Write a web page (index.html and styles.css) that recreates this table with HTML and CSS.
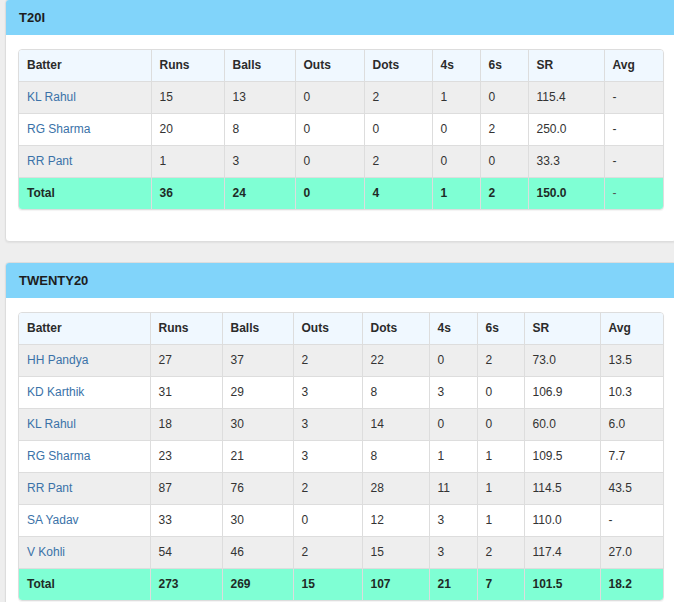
FILE: index.html
```html
<!DOCTYPE html>
<html lang="en">
<head>
    <meta charset="UTF-8">
    <meta name="viewport" content="width=device-width, initial-scale=1.0">
    <title>Batting by Format</title>
    <link rel="stylesheet" href="styles.css">
</head>
<body>
    <div class="page">
        <!-- T20I -->
        <div class="panel">
            <div class="panel-heading">T20I</div>
            <div class="panel-body">
                <div class="table-wrap">
                    <table class="scores scores-t20i">
                        <colgroup>
                            <col><col><col><col><col><col><col><col><col>
                        </colgroup>
                        <thead>
                            <tr>
                                <th>Batter</th><th>Runs</th><th>Balls</th><th>Outs</th><th>Dots</th><th>4s</th><th>6s</th><th>SR</th><th>Avg</th>
                            </tr>
                        </thead>
                        <tbody>
                            <tr><td><a href="#">KL Rahul</a></td><td>15</td><td>13</td><td>0</td><td>2</td><td>1</td><td>0</td><td>115.4</td><td>-</td></tr>
                            <tr><td><a href="#">RG Sharma</a></td><td>20</td><td>8</td><td>0</td><td>0</td><td>0</td><td>2</td><td>250.0</td><td>-</td></tr>
                            <tr><td><a href="#">RR Pant</a></td><td>1</td><td>3</td><td>0</td><td>2</td><td>0</td><td>0</td><td>33.3</td><td>-</td></tr>
                            <tr class="total"><td>Total</td><td>36</td><td>24</td><td>0</td><td>4</td><td>1</td><td>2</td><td>150.0</td><td class="muted">-</td></tr>
                        </tbody>
                    </table>
                </div>
            </div>
        </div>

        <!-- TWENTY20 -->
        <div class="panel">
            <div class="panel-heading">TWENTY20</div>
            <div class="panel-body">
                <div class="table-wrap">
                    <table class="scores scores-t20">
                        <colgroup>
                            <col><col><col><col><col><col><col><col><col>
                        </colgroup>
                        <thead>
                            <tr>
                                <th>Batter</th><th>Runs</th><th>Balls</th><th>Outs</th><th>Dots</th><th>4s</th><th>6s</th><th>SR</th><th>Avg</th>
                            </tr>
                        </thead>
                        <tbody>
                            <tr><td><a href="#">HH Pandya</a></td><td>27</td><td>37</td><td>2</td><td>22</td><td>0</td><td>2</td><td>73.0</td><td>13.5</td></tr>
                            <tr><td><a href="#">KD Karthik</a></td><td>31</td><td>29</td><td>3</td><td>8</td><td>3</td><td>0</td><td>106.9</td><td>10.3</td></tr>
                            <tr><td><a href="#">KL Rahul</a></td><td>18</td><td>30</td><td>3</td><td>14</td><td>0</td><td>0</td><td>60.0</td><td>6.0</td></tr>
                            <tr><td><a href="#">RG Sharma</a></td><td>23</td><td>21</td><td>3</td><td>8</td><td>1</td><td>1</td><td>109.5</td><td>7.7</td></tr>
                            <tr><td><a href="#">RR Pant</a></td><td>87</td><td>76</td><td>2</td><td>28</td><td>11</td><td>1</td><td>114.5</td><td>43.5</td></tr>
                            <tr><td><a href="#">SA Yadav</a></td><td>33</td><td>30</td><td>0</td><td>12</td><td>3</td><td>1</td><td>110.0</td><td>-</td></tr>
                            <tr><td><a href="#">V Kohli</a></td><td>54</td><td>46</td><td>2</td><td>15</td><td>3</td><td>2</td><td>117.4</td><td>27.0</td></tr>
                            <tr class="total"><td>Total</td><td>273</td><td>269</td><td>15</td><td>107</td><td>21</td><td>7</td><td>101.5</td><td>18.2</td></tr>
                        </tbody>
                    </table>
                </div>
            </div>
        </div>
    </div>
</body>
</html>
```

FILE: styles.css
```css
html, body {
    margin: 0;
    overflow: hidden;
}

body {
    font-family: "Liberation Sans", Arial, sans-serif;
    font-size: 12px;
    color: #333;
    background: #eeeeee;
}

.page {
    padding-left: 5px;
    margin-top: -1px;
}

.panel {
    width: 672px;
    box-sizing: border-box;
    background: white;
    border: 1px solid #dddddd;
    border-radius: 4px;
    margin-bottom: 20px;
    box-shadow: 0 1px 2px rgba(0,0,0,0.06);
}

.panel-heading {
    background: #81d4fa;
    color: #1d1d1d;
    font-size: 13px;
    font-weight: bold;
    line-height: 15px;
    padding: 10px 13px 10px 13px;
    border-top-left-radius: 3px;
    border-top-right-radius: 3px;
}

.panel-body {
    padding: 14px 12px 15px 12px;
}

.table-wrap {
    border: 1px solid #dddddd;
    border-radius: 4px;
    overflow: hidden;
    margin-bottom: 16px;
    box-shadow: 0 1px 1px rgba(0,0,0,0.05);
}

.scores {
    width: 100%;
    table-layout: fixed;
    border-collapse: collapse;
}

.scores th,
.scores td {
    padding: 8px 8px 8px 8px;
    line-height: 15px;
    text-align: left;
    white-space: nowrap;
}

.scores th + th,
.scores td + td {
    border-left: 1px solid #dddddd;
}

.scores tbody td {
    border-top: 1px solid #dddddd;
}

.scores th {
    background: #f0f8ff;
    font-weight: bold;
    color: #2b2b2b;
}

.scores tbody tr:nth-child(odd) {
    background: #eeeeee;
}

.scores a {
    color: #3a72a8;
    text-decoration: none;
}

.scores tr.total {
    background: #7fffd4 !important;
}

.scores tr.total td {
    font-weight: bold;
    color: #1e2b27;
}

.scores tr.total td.muted {
    font-weight: normal;
    color: #555;
}

/* column widths, T20I */
.scores-t20i col:nth-child(1) { width: 132px; }
.scores-t20i col:nth-child(2) { width: 73px; }
.scores-t20i col:nth-child(3) { width: 71px; }
.scores-t20i col:nth-child(4) { width: 69px; }
.scores-t20i col:nth-child(5) { width: 68px; }
.scores-t20i col:nth-child(6) { width: 48px; }
.scores-t20i col:nth-child(7) { width: 48px; }
.scores-t20i col:nth-child(8) { width: 76px; }
.scores-t20i col:nth-child(9) { width: 59px; }

/* column widths, TWENTY20 */
.scores-t20 col:nth-child(1) { width: 131px; }
.scores-t20 col:nth-child(2) { width: 72px; }
.scores-t20 col:nth-child(3) { width: 71px; }
.scores-t20 col:nth-child(4) { width: 69px; }
.scores-t20 col:nth-child(5) { width: 67px; }
.scores-t20 col:nth-child(6) { width: 48px; }
.scores-t20 col:nth-child(7) { width: 47px; }
.scores-t20 col:nth-child(8) { width: 76px; }
.scores-t20 col:nth-child(9) { width: 63px; }
```
